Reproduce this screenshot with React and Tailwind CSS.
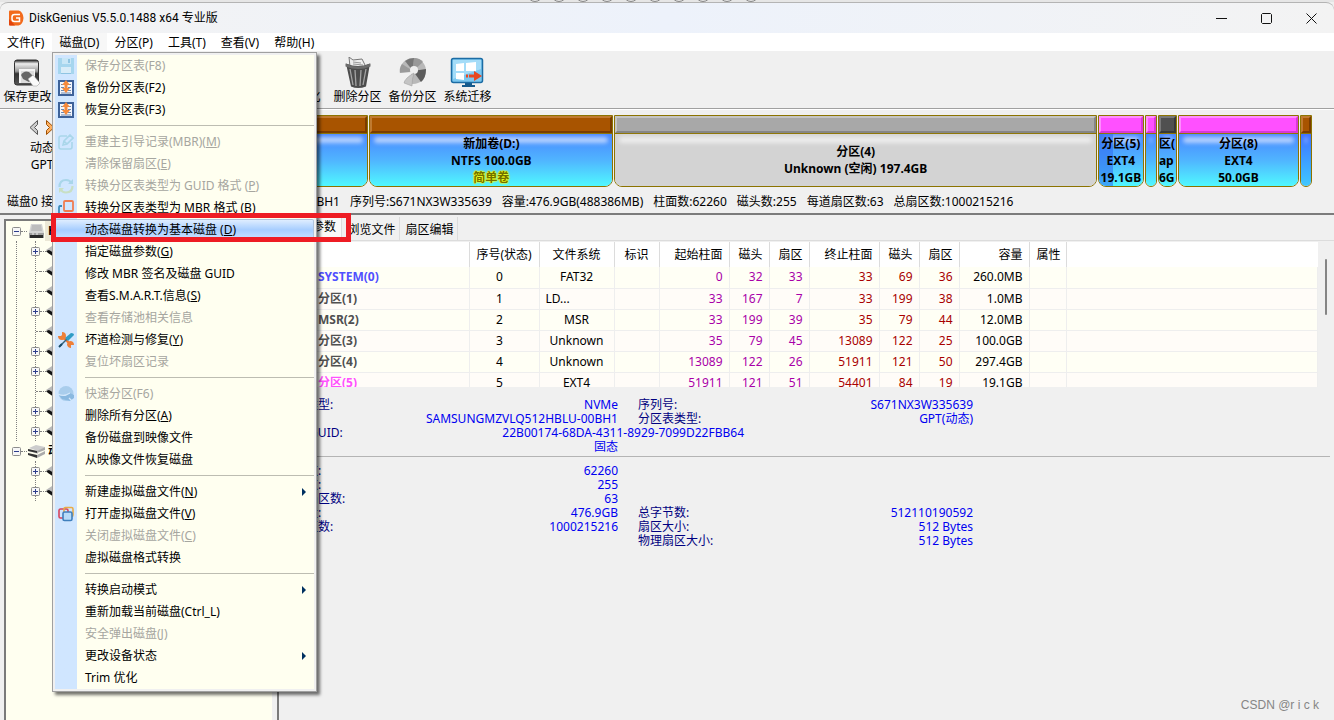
/**
 * Disk manager main window
 * Shows the partition layout with the "disk" menu open
 */

import { useState } from 'react';

const MENUS = ['文件(F)', '磁盘(D)', '分区(P)', '工具(T)', '查看(V)', '帮助(H)'];

const TOOLS = [
    { label: '保存更改', icon: 'save' },
    { label: '搜索分区' },
    { label: '恢复文件' },
    { label: '快速分区' },
    { label: '新建分区' },
    { label: '格式化' },
    { label: '删除分区', icon: 'trash' },
    { label: '备份分区', icon: 'backup' },
    { label: '系统迁移', icon: 'migrate' }
];

const DISK_MENU = [
    [
        { label: '保存分区表(F8)', icon: 'floppy', disabled: true },
        { label: '备份分区表(F2)', icon: 'table' },
        { label: '恢复分区表(F3)', icon: 'table' }
    ],
    [
        { label: '重建主引导记录(MBR)(', hotkey: 'M', icon: 'edit', disabled: true },
        { label: '清除保留扇区(', hotkey: 'E', disabled: true },
        { label: '转换分区表类型为 GUID 格式 (', hotkey: 'P', icon: 'refresh', disabled: true },
        { label: '转换分区表类型为 MBR 格式 (', hotkey: 'B', icon: 'convert' },
        { label: '动态磁盘转换为基本磁盘 (', hotkey: 'D', active: true },
        { label: '指定磁盘参数(', hotkey: 'G' },
        { label: '修改 MBR 签名及磁盘 GUID' },
        { label: '查看S.M.A.R.T.信息(', hotkey: 'S' },
        { label: '查看存储池相关信息', disabled: true },
        { label: '坏道检测与修复(', hotkey: 'Y', icon: 'repair' },
        { label: '复位坏扇区记录', disabled: true }
    ],
    [
        { label: '快速分区(F6)', icon: 'quick', disabled: true },
        { label: '删除所有分区(', hotkey: 'A' },
        { label: '备份磁盘到映像文件' },
        { label: '从映像文件恢复磁盘' }
    ],
    [
        { label: '新建虚拟磁盘文件(', hotkey: 'N', submenu: true },
        { label: '打开虚拟磁盘文件(', hotkey: 'V', icon: 'virtual' },
        { label: '关闭虚拟磁盘文件(', hotkey: 'C', disabled: true },
        { label: '虚拟磁盘格式转换' }
    ],
    [
        { label: '转换启动模式', submenu: true },
        { label: '重新加载当前磁盘(Ctrl_L)' },
        { label: '安全弹出磁盘(', hotkey: 'J', disabled: true },
        { label: '更改设备状态', submenu: true },
        { label: 'Trim 优化' }
    ]
];

const BLUE_BODY = 'bg-linear-to-b from-[#4a86ff] via-[#50b4ff] to-[#50f8ff]';
const BROWN_HEAD = 'bg-[#a85400] border-t-[#c07a30] border-l-[#c07a30] border-b-[#7a3c00] border-r-[#7a3c00]';
const PINK_HEAD = 'bg-[#ff50ff] border-t-[#ff8cff] border-l-[#ff8cff] border-b-[#d838d8] border-r-[#d838d8]';
const GRAY_HEAD = 'bg-[#a8a8a8] border-t-[#c4c4c4] border-l-[#c4c4c4] border-b-[#868686] border-r-[#868686]';
const DARK_HEAD = 'bg-[#505050] border-t-[#787878] border-l-[#787878] border-b-[#383838] border-r-[#383838]';

const PARTITIONS = [
    { size: 'flex-[282_1_0px]', head: BROWN_HEAD, body: BLUE_BODY, lines: [] },
    { size: 'flex-[242_1_0px]', head: BROWN_HEAD, body: BLUE_BODY, lines: ['新加卷(D:)', 'NTFS 100.0GB'], tag: '简单卷' },
    { size: 'flex-[480_1_0px]', head: GRAY_HEAD, body: 'bg-[#d3d3d3]', lines: ['分区(4)', 'Unknown (空闲) 197.4GB'] },
    { size: 'flex-[44_1_0px]', head: PINK_HEAD, body: BLUE_BODY, lines: ['分区(5)', 'EXT4', '19.1GB'], used: true },
    { size: 'flex-[10_1_0px]', head: PINK_HEAD, body: BLUE_BODY, lines: [] },
    { size: 'flex-[17_1_0px]', head: DARK_HEAD, body: BLUE_BODY, lines: ['区(', 'ap', '6G'], narrow: true },
    { size: 'flex-[119_1_0px]', head: PINK_HEAD, body: BLUE_BODY, lines: ['分区(8)', 'EXT4', '50.0GB'] },
    { size: 'flex-[10_1_0px]', head: BROWN_HEAD, body: 'bg-linear-to-b from-[#4070ff] to-[#40c8ff]', lines: [] }
];

const COLUMNS = [
    { title: '', width: 'w-[190px]', align: 'text-left' },
    { title: '序号(状态)', width: 'w-[70px]', align: 'text-center' },
    { title: '文件系统', width: 'w-[75px]', align: 'text-center' },
    { title: '标识', width: 'w-[45px]', align: 'text-center' },
    { title: '起始柱面', width: 'w-[70px]', align: 'text-right' },
    { title: '磁头', width: 'w-[40px]', align: 'text-right' },
    { title: '扇区', width: 'w-[40px]', align: 'text-right' },
    { title: '终止柱面', width: 'w-[70px]', align: 'text-right' },
    { title: '磁头', width: 'w-[40px]', align: 'text-right' },
    { title: '扇区', width: 'w-[40px]', align: 'text-right' },
    { title: '容量', width: 'w-[70px]', align: 'text-right' },
    { title: '属性', width: 'w-[37px]', align: 'text-right' }
];

const ROWS = [
    { name: 'SYSTEM(0)', color: 'text-[#5050ff]', no: 0, fs: 'FAT32', start: [0, 32, 33], end: [33, 69, 36], size: '260.0MB' },
    { name: '分区(1)', color: 'text-[#505050]', no: 1, fs: 'LD...', fsLeft: true, start: [33, 167, 7], end: [33, 199, 38], size: '1.0MB' },
    { name: 'MSR(2)', color: 'text-[#505050]', no: 2, fs: 'MSR', start: [33, 199, 39], end: [35, 79, 44], size: '12.0MB' },
    { name: '分区(3)', color: 'text-[#505050]', no: 3, fs: 'Unknown', start: [35, 79, 45], end: [13089, 122, 25], size: '100.0GB' },
    { name: '分区(4)', color: 'text-[#505050]', no: 4, fs: 'Unknown', start: [13089, 122, 26], end: [51911, 121, 50], size: '297.4GB' },
    { name: '分区(5)', color: 'text-[#ff50ff]', no: 5, fs: 'EXT4', start: [51911, 121, 51], end: [54401, 84, 19], size: '19.1GB' }
];

const TREE = [
    { children: [true, false, false, true, false, true, true, false, true, true], selected: true, label: 'HD0:SAMSUNGMZVLQ512HBLU' },
    { children: [true, true], stack: true, label: '动态卷' }
];

const AppLogo = () => (
    <svg className="w-4 h-4" viewBox="0 0 16 16">
        <path d="M2 0.5h8.5Q15 1.5 15.5 8Q15 14.5 10.5 15.5H2Q1 15.5 1 14.5V1.5Q1 0.5 2 0.5z" fill="#f26a1b" />
        <path d="M1 9l6 6.500H2Q1 15.500 1 14.500z" fill="#e2430c" />
        <path d="M12 4.500H6.500Q4 4.500 4 7v2q0 2.500 2.500 2.500h5V8H8" fill="none" stroke="#fff" strokeWidth="1.5" />
    </svg>
);

const ToolIcon = ({ name }) => {
    if (name === 'save') {
        return (
            <svg className="w-8 h-8" viewBox="0 0 32 32">
                <defs>
                    <linearGradient id="saveBody" x1="0" y1="0" x2="0" y2="1">
                        <stop offset="0" stopColor="#222" />
                        <stop offset=".15" stopColor="#eee" />
                        <stop offset=".45" stopColor="#999" />
                        <stop offset=".55" stopColor="#333" />
                        <stop offset="1" stopColor="#555" />
                    </linearGradient>
                </defs>
                <rect x="2.5" y="3" width="24" height="25" rx="2.5" fill="url(#saveBody)" stroke="#333" />
                <rect x="7" y="12" width="16" height="14" fill="#f4f4f4" />
                <rect x="9" y="14" width="13" height="12" fill="#dcdcdc" />
                <path d="M9 18q3-5 8-3l5 5-5 5-6-3z" fill="#666" />
                <path d="M16 22l5-4 7 8-3 3h-4z" fill="#fafafa" stroke="#999" strokeWidth=".5" />
            </svg>
        );
    }
    if (name === 'trash') {
        return (
            <svg className="w-8 h-8" viewBox="0 0 32 32">
                <path d="M7 0l4 3 9-1 4 8H8z" fill="#eee" stroke="#777" />
                <path d="M11 5l8 1M11 7l10 1" stroke="#999" />
                <path d="M4 6.500q12 5 24 0l-4 23q-8 3-15 0z" fill="#4c4c4c" />
                <path d="M3.500 6.500q12 6 25 0v3q-12 5-25 0z" fill="#6c6c6c" />
                <path d="M8 12l3 16M13 13l1 16M19 13l-1 16M24 12l-3 16" stroke="#a4a4a4" strokeWidth="1.3" />
            </svg>
        );
    }
    if (name === 'backup') {
        return (
            <svg className="w-8 h-8" viewBox="0 0 32 32">
                <circle cx="16" cy="14" r="13" fill="#b8b8b8" />
                <path d="M16 14L8 4Q12 1 17 1z" fill="#777" />
                <path d="M16 14L17 1q6 0 9 4z" fill="#999" />
                <path d="M16 14l13-2q0 9-5 13z" fill="#5c5c5c" />
                <path d="M16 14L3 17q-1-6 2-10z" fill="#9a9a9a" />
                <path d="M2 16l13-1-1 5-7 5q-5-4-5-9z" fill="#f0f0f0" />
                <circle cx="17" cy="13" r="4" fill="#eee" />
                <path d="M17 16q-2 6-2 13l-8-3q1-5 10-10z" fill="#c4c4c4" stroke="#999" strokeWidth=".5" />
            </svg>
        );
    }
    if (name === 'migrate') {
        return (
            <svg className="w-9 h-8" viewBox="0 0 36 32">
                <path d="M15 25h7v3h3v2H12v-2h3z" fill="#155a8c" />
                <rect x="1.5" y="1.5" width="31" height="24" rx="2" fill="#7cc8f0" stroke="#1c6ca4" strokeWidth="1.5" />
                <path d="M3 3h28v9L3 22z" fill="#a4dcf8" />
                <path d="M6 7l8-1v8H6zM16 6l10-1v9H16zM6 16h8v7l-8-1z" fill="#fff" />
                <path d="M16 17.500h2v3h-2zM19 17.500h5V14l8 5-8 5v-3.500h-5z" fill="#e84820" />
            </svg>
        );
    }
    return <span className="w-8 h-8" />;
};

const MenuIcon = ({ name }) => {
    switch (name) {
        case 'floppy':
            return (
                <svg className="w-4 h-4" viewBox="0 0 16 16">
                    <path d="M0 0h16v16H0z" fill="#a6d6ee" />
                    <path d="M4 0h9v6H4z" fill="#c8e6f6" />
                    <path d="M10 1h2v4h-2zM3 9h10v7H3z" fill="#8fc4e2" />
                    <path d="M3 9h10v6H3z" fill="#d8ecf8" />
                </svg>
            );
        case 'table':
            return (
                <svg className="w-4 h-4" viewBox="0 0 16 16">
                    <path d="M1 1h14v14H1z" fill="#f4f6fa" stroke="#3d6299" strokeWidth="2" />
                    <path d="M3 4.500h3M3 7.500h3M3 10.500h3M3 13h10M10 4.500h3M10 7.500h3M10 10.500h3" stroke="#6a87b0" />
                    <path d="M8 0l4 5H9.500v3H12l-4 5-4-5h2.500V5H4z" fill="#f58a3c" />
                </svg>
            );
        case 'edit':
            return (
                <svg className="w-4 h-4" viewBox="0 0 16 16" fill="none" stroke="#a9d6ea" strokeWidth="1.6">
                    <path d="M9 2H3Q1 2 1 4v9q0 2 2 2h9q2 0 2-2V8" />
                    <path d="M5 11l1-4 6-6 3 3-6 6zM6 7l3 3" />
                </svg>
            );
        case 'refresh':
            return (
                <svg className="w-4 h-4" viewBox="0 0 16 16" fill="none" strokeWidth="2.2">
                    <path d="M1.500 9q0-7 6.500-7 4 0 5 3" stroke="#a9d6ea" />
                    <path d="M10 6h5V1z" fill="#a9d6ea" />
                    <path d="M14.500 8q0 6.500-6.500 6.500-4 0-5-3" stroke="#c8dfc4" />
                    <path d="M1 10h5l-5 5z" fill="#c8dfc4" />
                </svg>
            );
        case 'convert':
            return (
                <svg className="w-4 h-4" viewBox="0 0 16 16" fill="none" strokeWidth="1.8">
                    <path d="M4 6H2Q1 6 1 8v8h9v-3" stroke="#3d8cba" />
                    <rect x="6" y="1" width="9" height="10" rx="1" stroke="#ef7d52" />
                </svg>
            );
        case 'repair':
            return (
                <svg className="w-4 h-4" viewBox="0 0 16 16">
                    <path d="M4 4l9 9" stroke="#ee7733" strokeWidth="2.4" />
                    <path d="M4 0v3L3 4H0q0 4 4 4 4 0 4-4 0-4-4-4zM12 9q-3 1-3 4 1 3 4 3v-3h3q0-4-4-4z" fill="#ee8038" />
                    <path d="M2 14l7-7" stroke="#32627c" strokeWidth="1.5" />
                    <path d="M7 6l6-5q3 0 3 2l-6 6z" fill="#2e9cc4" />
                    <path d="M1 15l3-3" stroke="#174b68" strokeWidth="2" />
                </svg>
            );
        case 'quick':
            return (
                <svg className="w-4 h-4" viewBox="0 0 16 16">
                    <circle cx="8" cy="7.5" r="7.5" fill="#a9cdec" />
                    <path d="M1 9l6 1 5-3 4 2v3l-4 3-8-2z" fill="#8ab9e0" />
                    <path d="M0 8q4 2 8 1l4-2M11 12l3 3" stroke="#d3e8fb" fill="none" strokeWidth="1.3" />
                </svg>
            );
        case 'virtual':
            return (
                <svg className="w-4 h-4" viewBox="0 0 16 16" strokeWidth="1.6" fill="none">
                    <rect x="1" y="3" width="9" height="9" rx="1.5" stroke="#d8445c" />
                    <rect x="6" y="1.5" width="9" height="9" rx="1.5" stroke="#e8ac48" />
                    <rect x="5" y="6" width="9" height="8.5" rx="1.5" stroke="#3f7fbd" fill="#b8dcf8" />
                </svg>
            );
        default:
            return null;
    }
};

const TitleBar = () => (
    <header className="flex items-center h-[31px] bg-linear-to-r from-[#f3f3f3] via-[#edf2fb] to-[#f3f3f3] border-t border-[#b4b4b4] rounded-t-lg">
        <div className="flex items-center gap-1 pl-2 grow">
            <AppLogo />
            <h1 className="pl-px font-['Roboto','Noto_Sans_CJK_SC',sans-serif]">DiskGenius V5.5.0.1488 x64 专业版</h1>
        </div>
        {[
            { name: '最小化', d: 'M0 5.500h11' },
            { name: '最大化', d: 'M1.500 0.500h8l1 1v8l-1 1h-8l-1-1v-8z' },
            { name: '关闭', d: 'M0.500 0.500l10 10M10.500 0.500l-10 10' }
        ].map(btn => (
            <button key={btn.name} aria-label={btn.name} className="w-[45px] h-full flex items-center justify-center">
                <svg className="w-[11px] h-[11px]" viewBox="0 0 11 11" fill="none" stroke="#111"><path d={btn.d} /></svg>
            </button>
        ))}
    </header>
);

const DiskMenu = () => (
    <div role="menu" className="absolute left-[52px] top-[52px] w-[265px] z-10 border border-[#a0a0a0] shadow-[3px_3px_3px_rgba(0,0,0,0.55)]">
        <div className="border-2 border-[#f0f0f0] bg-linear-to-r from-[#d0e6ff] from-[22px] to-[#fffff0] to-[22px]">
            {DISK_MENU.map((group, i) => (
                <div key={i}>
                    {i > 0 && <div className="h-[10px] pl-[30px] pt-1"><div className="h-px bg-[#bdbdb2]" /></div>}
                    {group.map(item => (
                        <button
                            key={item.label}
                            role="menuitem"
                            disabled={item.disabled}
                            className={`flex items-center w-full h-[22px] text-left ${item.disabled ? 'text-[#a6a6a0]' : 'text-black'} ${item.active ? 'rounded-xs bg-linear-to-b from-[#e4f0ff] via-[#a6cdff] to-[#d0e6ff] inset-ring inset-ring-[#b0c4dc]' : ''}`}
                        >
                            <span className="w-[30px] pl-[3px] shrink-0"><MenuIcon name={item.icon} /></span>
                            <span className="grow whitespace-nowrap">
                                {item.label}
                                {item.hotkey && <><u>{item.hotkey}</u>)</>}
                            </span>
                            {item.submenu && (
                                <svg className="w-1 h-2 mr-2" viewBox="0 0 4 8"><path d="M0 0l4 4-4 4z" fill="#003060" /></svg>
                            )}
                        </button>
                    ))}
                </div>
            ))}
        </div>
    </div>
);

const Partition = ({ part }) => (
    <button className={`${part.size} min-w-0 flex flex-col h-[72px] border border-[#8c7300] rounded-b-lg overflow-hidden font-bold`}>
        <span className={`w-full h-[17px] shrink-0 border-2 ${part.head}`} />
        <span className={`relative w-full grow border-t border-[#8c7300] flex flex-col ${part.narrow ? 'items-start' : 'items-center'} justify-center leading-[17px] ${part.body}`}>
            <span className="absolute inset-x-1 top-[3px] h-[6px] rounded-full bg-white/60 blur-[2px]" />
            {part.used && <span className="absolute left-0 inset-y-0 w-[14px] bg-[#3070f0]/60" />}
            {part.lines.map(line => <span key={line} className="relative whitespace-nowrap">{line}</span>)}
            {part.tag && <span className="relative text-[#707000] text-shadow-[0_0_2px_#ffff00,0_0_2px_#ffff00,0_0_1px_#ffff00,0_0_1px_#ffff00]">{part.tag}</span>}
        </span>
    </button>
);

const DiskPanel = () => (
    <section className="h-[106px] border-b-2 border-[#7c7c7c] border-t border-t-white">
        <div className="flex pt-[5px] pr-[22px]">
            <div className="w-[84px] shrink-0 flex flex-col items-center leading-[17px]">
                <div className="flex gap-[6px] pt-[5px] pb-1">
                    <button aria-label="上一个磁盘">
                        <svg className="w-[10px] h-[15px]" viewBox="0 0 10 15"><path d="M8.500 0.500v4l-3 3 3 3v4L1 7.500z" fill="#ccc" stroke="#555" /></svg>
                    </button>
                    <button aria-label="下一个磁盘">
                        <svg className="w-[10px] h-[15px]" viewBox="0 0 10 15"><path d="M1.500 0.500v4l3 3-3 3v4L9 7.500z" fill="#ffb060" stroke="#a05000" /></svg>
                    </button>
                </div>
                <span>动态</span>
                <span>GPT</span>
            </div>
            <div className="flex grow gap-px">
                {PARTITIONS.map((part, i) => <Partition key={i} part={part} />)}
            </div>
        </div>
        <p className="flex gap-[10px] pl-[7px] pt-[6px] leading-[17px] whitespace-nowrap">
            <span className="w-[333px] text-right shrink-0 flex justify-between">
                <span>磁盘0 接口:NVMe</span>
                <span>型号:SAMSUNGMZVLQ512HBLU-00BH1</span>
            </span>
            <span>序列号:S671NX3W335639</span>
            <span>容量:476.9GB(488386MB)</span>
            <span>柱面数:62260</span>
            <span>磁头数:255</span>
            <span>每道扇区数:63</span>
            <span>总扇区数:1000215216</span>
        </p>
    </section>
);

const Toggle = ({ open }) => (
    <svg className="w-[9px] h-[9px] shrink-0" viewBox="0 0 9 9">
        <rect x=".5" y=".5" width="8" height="8" rx="1" fill="#f6f6f6" stroke="#8c8c8c" />
        <path d={open ? 'M2 4.500h5' : 'M2 4.500h5M4.500 2v5'} stroke="#2c3c8c" />
    </svg>
);

const DiskTree = () => (
    <nav className="w-[268px] ml-1 mt-1 shrink-0 border-l-2 border-t-2 border-[#7a7a7a] bg-[#fffff0] overflow-hidden">
        <ul className="pl-[6px]">
            {TREE.map((node, i) => (
                <li key={i}>
                    <div className="flex items-center h-5">
                        <Toggle open />
                        <span className="w-[6px] border-t border-dotted border-[#808080] mr-px" />
                        {node.stack ? (
                            <svg className="w-[17px] h-4 shrink-0" viewBox="0 0 17 16">
                                <path d="M1 5l7-3 9 2-7 4zM1 6v2l9 3V8z" fill="#ccc" />
                                <path d="M0 6l9 2v2L0 8zM0 10l9 2v3l-9-3z" fill="#333" />
                                <path d="M9 8l8-4v3l-8 3zM9 12l8-4v3l-8 4z" fill="#aaa" />
                            </svg>
                        ) : (
                            <svg className="w-[17px] h-4 shrink-0" viewBox="0 0 17 16">
                                <path d="M3 1h11l2 9H1z" fill="#d4d4d4" />
                                <path d="M4 2h9l1 6H3z" fill="#bdbdbd" />
                                <path d="M1 10h15v5H1z" fill="#a0a0a0" />
                                <path d="M2 12h13v3H2z" fill="#2a2a2a" />
                                <path d="M4 11h2M8 11h2" stroke="#eee" />
                            </svg>
                        )}
                        <span className={`pl-[3px] whitespace-nowrap leading-5 font-bold ${node.selected ? 'bg-[#ece8d6]' : ''}`}>{node.label}</span>
                    </div>
                    <div className={`ml-1 pl-[18px] border-l border-dotted ${node.selected ? 'border-[#808080]' : 'border-transparent'}`}>
                        <ul className="border-l border-dotted border-[#808080]">
                            {node.children.map((expandable, j) => (
                                <li key={j} className="flex items-center h-5">
                                    {expandable ? <span className="-ml-[5px] flex"><Toggle /></span> : <span className="w-1 border-t border-dotted border-[#808080]" />}
                                    <span className="w-[6px] border-t border-dotted border-[#808080]" />
                                    <svg className="w-4 h-3" viewBox="0 0 16 12">
                                        <path d="M0 5l6-4 10 3v4l-8 1z" fill="#bbb" />
                                        <path d="M0 6l3-1 5 3v4L2 8z" fill="#111" />
                                    </svg>
                                </li>
                            ))}
                        </ul>
                    </div>
                </li>
            ))}
        </ul>
    </nav>
);

const PartitionTable = () => (
    <div className="flex h-[145px] overflow-hidden">
        <div className="grow bg-white">
            <table className="w-full table-fixed border-collapse">
                <thead>
                    <tr className="h-[25px] bg-white">
                        {COLUMNS.map((col, i) => (
                            <th key={i} className={`${col.width} ${col.align} ${col.title === '属性' ? 'px-[5px]' : col.align === 'text-right' ? 'pr-[6px]' : ''} border-r border-[#dcdcdc] font-normal whitespace-nowrap`}>{col.title}</th>
                        ))}
                        <th />
                    </tr>
                </thead>
                <tbody>
                    {ROWS.map(row => (
                        <tr key={row.no} className="h-[21px] odd:bg-[#fffff5] even:bg-[#fffcf8] border-b border-[#eeeeee] *:border-r *:border-[#eeeeee] *:leading-5">
                            <td className={`pl-[39px] font-bold ${row.color}`}>{row.name}</td>
                            <td className="text-center pr-[9px]">{row.no}</td>
                            <td className={row.fsLeft ? 'pl-[6px]' : 'text-center'}>{row.fs}</td>
                            <td />
                            {row.start.map((n, i) => <td key={i} className="text-right pr-[6px] text-[#a800a8]">{n}</td>)}
                            {row.end.map((n, i) => <td key={i} className="text-right pr-[6px] text-[#a80000]">{n}</td>)}
                            <td className="text-right pr-[6px]">{row.size}</td>
                            <td />
                            <td />
                        </tr>
                    ))}
                </tbody>
            </table>
        </div>
        <div className="w-4 pt-[17px] pl-[7px] shrink-0">
            <div className="w-[2px] h-14 rounded-full bg-[#858585]" />
        </div>
    </div>
);

const Info = ({ label, value, label2, value2, wide }) => (
    <div className="flex h-[14px] leading-[14px] whitespace-nowrap text-[#0000f0]">
        <dt className="w-[100px] text-[#000080]">{label}</dt>
        <dd className={`text-right ${wide ? 'w-[362px]' : 'w-[236px]'}`}>{value}</dd>
        {label2 && (
            <>
                <dt className="w-[120px] pl-5 text-[#000080]">{label2}</dt>
                <dd className="w-[235px] text-right">{value2}</dd>
            </>
        )}
    </div>
);

const App = () => {
    const [tab, setTab] = useState('分区参数');

    return (
        <div className="relative flex flex-col min-h-screen overflow-hidden bg-[#f0f0f0] text-black text-xs font-['Noto_Sans','Noto_Sans_CJK_SC',sans-serif]">
            <div className="flex justify-center gap-2 h-[2px] pr-12 overflow-hidden bg-[#e6e6e6] items-end">
                {[0, 1, 2, 3, 4, 5, 6, 7, 8, 9].map(n => (
                    <span key={n} className="w-4 h-4 shrink-0 rounded-full border border-[#888]" />
                ))}
            </div>
            <TitleBar />
            <nav className="flex h-[18px] bg-white leading-5">
                {MENUS.map(name => (
                    <button key={name} className={`pl-[7px] pr-2 whitespace-nowrap ${name === '磁盘(D)' ? 'bg-[#f7f7f7]' : ''}`}>{name}</button>
                ))}
            </nav>
            <div className="flex h-[58px] pt-[6px] border-b border-[#a0a0a0]">
                {TOOLS.map(tool => (
                    <button key={tool.label} className="w-[55px] flex flex-col items-center whitespace-nowrap">
                        <ToolIcon name={tool.icon} />
                        <span className="leading-4">{tool.label}</span>
                    </button>
                ))}
            </div>
            <DiskPanel />
            <main className="flex grow">
                <DiskTree />
                <section className="grow ml-[5px] min-w-0 border-l-2 border-[#7a7a7a] pt-[2px]">
                    <div role="tablist" className="flex items-end border-b border-[#dcdcdc]">
                        {['分区参数', '浏览文件', '扇区编辑'].map(name => (
                            <button
                                key={name}
                                role="tab"
                                aria-selected={tab === name}
                                onClick={() => setTab(name)}
                                className={`h-[23px] border-r border-[#dcdcdc] ${tab === name ? 'w-[63px] bg-[#f9f9f9] pb-1 pl-1' : 'w-[58px] pt-[2px] pl-[2px]'}`}
                            >
                                {name}
                            </button>
                        ))}
                    </div>
                    <div className="pt-px"><PartitionTable /></div>
                    <dl className="pl-[3px] pt-[11px]">
                        <Info label="接口类型:" value="NVMe" label2="序列号:" value2="S671NX3W335639" />
                        <Info label="型号:" value="SAMSUNGMZVLQ512HBLU-00BH1" label2="分区表类型:" value2="GPT(动态)" />
                        <Info label="磁盘 GUID:" value="22B00174-68DA-4311-8929-7099D22FBB64" wide />
                        <Info label="" value="固态" />
                    </dl>
                    <hr className="mt-[2px] mr-1 border-[#b4b4b4]" />
                    <dl className="pl-[3px] pt-[7px]">
                        <Info label="柱面数:" value="62260" />
                        <Info label="磁头数:" value="255" />
                        <Info label="每道扇区数:" value="63" />
                        <Info label="总容量:" value="476.9GB" label2="总字节数:" value2="512110190592" />
                        <Info label="总扇区数:" value="1000215216" label2="扇区大小:" value2="512 Bytes" />
                        <Info label="" value="" label2="物理扇区大小:" value2="512 Bytes" />
                    </dl>
                </section>
            </main>
            <DiskMenu />
            <div className="absolute z-20 left-[51px] top-[213px] w-[300px] h-[29px] border-5 border-[#ee1c24] pointer-events-none" />
            <span className="absolute right-[15px] bottom-[7px] leading-4 text-[#858585] font-['Liberation_Sans',sans-serif]">CSDN @r i c k</span>
        </div>
    );
};

export default App;
